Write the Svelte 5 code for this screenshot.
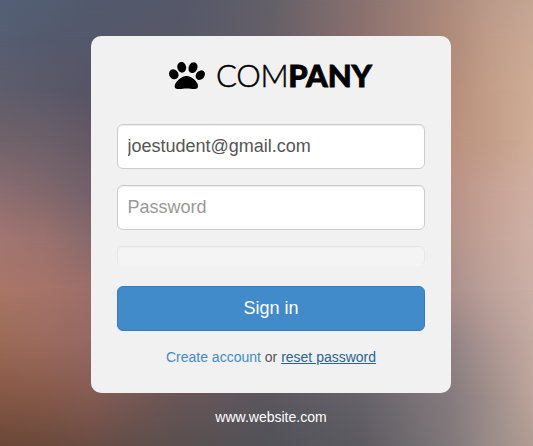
<script>
  let email = $state('joestudent@gmail.com');

  // Backdrop colours sampled along each horizontal band; bands fade into each other.
  const columns = [0, 45, 91, 180, 270, 360, 451, 492, 533];
  const bands = [
    [0, ['#536074', '#535e72', '#52596c', '#55586a', '#636068', '#897170', '#ad8c7d', '#bb9b8a', '#c4a693']],
    [36, ['#555e73', '#545a6e', '#54586b', '#565868', '#655e67', '#8a706d', '#b08b7c', '#c09d8a', '#c9a996']],
    [90, ['#5f5d6c', '#5b5969', '#575465', '#5b5869', '#6c6067', '#93736d', '#b68d7a', '#c49f89', '#cfac95']],
    [140, ['#71626a', '#6b6069', '#655964', '#62596a', '#725f68', '#99756f', '#ba917e', '#c39d88', '#d0ae98']],
    [190, ['#8a6d70', '#80676d', '#72606a', '#6a5a68', '#76606a', '#987570', '#ba9285', '#c6a294', '#d0b0a3']],
    [240, ['#a27570', '#9b726e', '#89696b', '#725d68', '#75606a', '#8f7272', '#b4938a', '#c4a398', '#cfb1a6']],
    [290, ['#a97566', '#a67369', '#9b6e69', '#79605f', '#6c5d66', '#7e6b70', '#ab908b', '#bda29a', '#cbafa5']],
    [340, ['#9d6b58', '#9c6b5f', '#956963', '#735c61', '#645b63', '#6c646b', '#938385', '#af9893', '#c3aaa1']],
    [395, ['#875845', '#87594a', '#845b53', '#695558', '#5a575f', '#65626a', '#867b7e', '#a08f8b', '#bca59c']],
    [446, ['#6a4637', '#6a493b', '#694c43', '#59504f', '#525258', '#5b5a60', '#80787a', '#9a8c88', '#b19c93']]
  ].map(([y, colors], i, all) => {
    const top = i ? all[i - 1][0] : 0;
    const stops = colors.map((c, n) => `${c} ${columns[n]}px`).join(', ');
    const fade = i ? `linear-gradient(transparent, #000 ${y - top}px)` : 'none';
    return `top:${top}px;background:linear-gradient(90deg, ${stops});mask-image:${fade}`;
  });
</script>

<div class="page">
  <div class="backdrop" aria-hidden="true">
    {#each bands as band}<div class="band" style={band}></div>{/each}
  </div>
  <main>
    <form class="card" onsubmit={(e) => e.preventDefault()}>
      <div class="brand">
        <svg width="36" height="27" viewBox="0 0 36 27" aria-hidden="true">
          <ellipse cx="4.8" cy="12.3" rx="4.5" ry="5.200" transform="rotate(-36 4.8 12.3)" />
          <ellipse cx="12.7" cy="5.3" rx="4.4" ry="5.4" transform="rotate(-10 12.7 5.3)" />
          <ellipse cx="24" cy="5.6" rx="4.3" ry="5.6" transform="rotate(22 24 5.6)" />
          <ellipse cx="31.3" cy="13.1" rx="4.2" ry="5.2" transform="rotate(42 31.3 13.1)" />
          <path d="M17.500 14C12 14 5.700 20.400 5.700 24.200C5.700 26.700 7.500 27 10 27C13 27 15 26.400 17.500 26.400C20.500 26.400 22.500 27 25.500 27C28.200 27 29 25.800 29 23.700C29 20.200 23 14 17.500 14Z" />
        </svg>
        <span class="name">COM<b>PANY</b></span>
      </div>
      <input class="field" type="text" aria-label="Email" bind:value={email} />
      <input class="field" type="password" placeholder="Password" />
      <div class="ghost"></div>
      <button type="submit">Sign in</button>
      <p><a href="#create">Create account</a> or <a class="active" href="#reset">reset password</a></p>
    </form>
    <a class="site" href="#site">www.website.com</a>
  </main>
</div>

<style>
  :global(body) { margin: 0; }
  .page {
    position: relative;
    width: 533px;
    height: 446px;
    overflow: hidden;
    font: 14px/20px "Liberation Sans", Arial, sans-serif;
    color: #555;
  }
  .backdrop, .band { position: absolute; inset: 0; }
  main {
    position: relative;
    display: flex;
    flex-direction: column;
    align-items: center;
    width: 360px;
    padding: 36px 0 0 91px;
  }
  .card {
    box-sizing: border-box;
    width: 360px;
    height: 357px;
    padding: 26px 26px 0;
    border-radius: 10px;
    background: #f1f1f1;
    display: flex;
    flex-direction: column;
  }
  .brand {
    display: flex;
    height: 27px;
    gap: 11px;
    padding-left: 52px;
    margin-bottom: 35px;
    color: #000;
  }
  .name {
    font: 300 31px/26px Lato, sans-serif;
    letter-spacing: -.35px;
    -webkit-text-stroke: .5px #000;
    white-space: nowrap;
  }
  .name b {
    font-weight: 900;
    letter-spacing: -.1px;
    -webkit-text-stroke: .8px #000;
  }
  .field, button {
    box-sizing: border-box;
    width: 308px;
    height: 45px;
    border: 1px solid #ccc;
    border-radius: 6px;
    font: 18px/24px "Liberation Sans", Arial, sans-serif;
  }
  .field {
    margin: 0 0 16px;
    padding: 10px 9px 10px 9.500px;
    background: #fff;
    color: #555;
    box-shadow: inset 0 1px 1px rgba(0, 0, 0, .075);
    outline: 0;
  }
  .field::placeholder { color: #999; opacity: 1; }
  .ghost {
    box-sizing: border-box;
    height: 20px;
    margin-bottom: 20px;
    border: 1px solid #ccc;
    border-bottom-color: transparent;
    border-radius: 5px;
    background: #fff;
    box-shadow: inset 0 1px 1px rgba(0, 0, 0, .075);
    opacity: .28;
  }
  button {
    padding: 0 0 2px;
    border-color: #357ebd;
    background: #428bca;
    color: #fff;
  }
  p { margin: 16px 0 0; text-align: center; }
  a { color: #428bca; text-decoration: none; }
  .active { color: #2a6496; text-decoration: underline; }
  .site { margin-top: 14px; color: #fff; }
</style>
